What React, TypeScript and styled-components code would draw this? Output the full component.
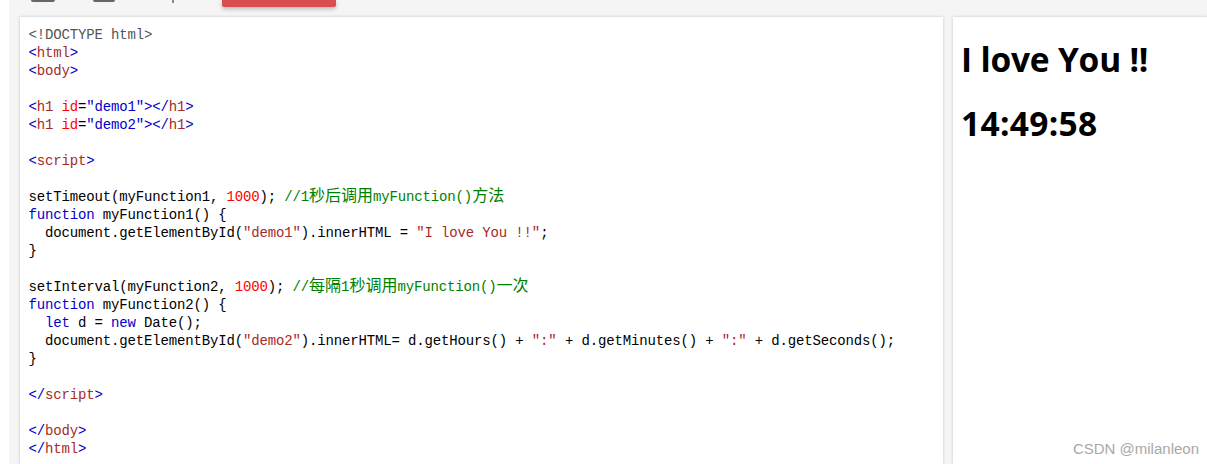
import React from 'react';
import styled, { createGlobalStyle } from 'styled-components';

const GlobalStyle = createGlobalStyle`
  html, body {
    margin: 0;
    padding: 0;
    background: #fff;
  }
  body {
    height: 464px;
    overflow: hidden;
  }
`;

type TokenKind = 'plain' | 'bracket' | 'tag' | 'attr' | 'value' | 'doctype' | 'keyword' | 'number' | 'string' | 'comment';

const kindColors: Record<TokenKind, string> = {
  plain: '#000000',
  bracket: '#0000cd',
  tag: '#a52a2a',
  attr: '#ff0000',
  value: '#0000cd',
  doctype: '#555555',
  keyword: '#0000cd',
  number: '#ff0000',
  string: '#a52a2a',
  comment: '#008000',
};

type Token = [TokenKind, string];

const tag = (open: string, name: string): Token[] => [
  ['bracket', open],
  ['tag', name],
  ['bracket', '>'],
];

const lines: Token[][] = [
  [['doctype', '<!DOCTYPE html>']],
  tag('<', 'html'),
  tag('<', 'body'),
  [],
  [['bracket', '<'], ['tag', 'h1 '], ['attr', 'id'], ['plain', '='], ['value', '"demo1"'], ['bracket', '></'], ['tag', 'h1'], ['bracket', '>']],
  [['bracket', '<'], ['tag', 'h1 '], ['attr', 'id'], ['plain', '='], ['value', '"demo2"'], ['bracket', '></'], ['tag', 'h1'], ['bracket', '>']],
  [],
  tag('<', 'script'),
  [],
  [['plain', 'setTimeout(myFunction1, '], ['number', '1000'], ['plain', '); '], ['comment', '//1秒后调用myFunction()方法']],
  [['keyword', 'function'], ['plain', ' myFunction1() {']],
  [['plain', '  document.getElementById('], ['string', '"demo1"'], ['plain', ').innerHTML = '], ['string', '"I love You !!"'], ['plain', ';']],
  [['plain', '}']],
  [],
  [['plain', 'setInterval(myFunction2, '], ['number', '1000'], ['plain', '); '], ['comment', '//每隔1秒调用myFunction()一次']],
  [['keyword', 'function'], ['plain', ' myFunction2() {']],
  [['plain', '  '], ['keyword', 'let'], ['plain', ' d = '], ['keyword', 'new'], ['plain', ' Date();']],
  [['plain', '  document.getElementById('], ['string', '"demo2"'], ['plain', ').innerHTML= d.getHours() + '], ['string', '":"'], ['plain', ' + d.getMinutes() + '], ['string', '":"'], ['plain', ' + d.getSeconds();']],
  [['plain', '}']],
  [],
  tag('</', 'script'),
  [],
  tag('</', 'body'),
  tag('</', 'html'),
];

// han characters sit in their own span, they run wider than the mono cell
const renderText = (text: string) =>
  text.split(/([\u4e00-\u9fff]+)/).map((part, i) =>
    /[\u4e00-\u9fff]/.test(part) ? <Han key={i}>{part}</Han> : part,
  );

const App: React.FC = () => {
  return (
    <Page>
      <GlobalStyle />
      <Toolbar>
        <ToolIcon $width={24} />
        <ToolIcon $width={22} $left={38} />
        <ToolTick />
        <RunButton />
      </Toolbar>
      <Panels>
        <CodePanel>
          {lines.map((tokens, i) => (
            <CodeLine key={i}>
              {tokens.map(([kind, text], j) => (
                <TokenText key={j} $kind={kind}>
                  {renderText(text)}
                </TokenText>
              ))}
            </CodeLine>
          ))}
        </CodePanel>
        <Divider />
        <ResultPanel>
          <Heading $spacing={-0.2}>I love You !!</Heading>
          <Heading $spacing={0.3}>14:49:58</Heading>
          <Watermark>CSDN @milanleon</Watermark>
        </ResultPanel>
      </Panels>
    </Page>
  );
};

export default App;

const Page = styled.div`
  width: 1207px;
  height: 464px;
  padding-left: 9px;
  box-sizing: border-box;
  display: flex;
  flex-direction: column;
  background: #fff;
  overflow: hidden;
`;

const Toolbar = styled.div`
  height: 17px;
  flex: none;
  display: flex;
  align-items: flex-start;
  padding-left: 22px;
  background: #f5f5f5;
`;

const ToolIcon = styled.div<{ $width: number; $left?: number }>`
  width: ${(p) => p.$width}px;
  height: 2px;
  margin-left: ${(p) => p.$left ?? 0}px;
  background: #666;
  border-radius: 0 0 2px 2px;
`;

const ToolTick = styled.div`
  width: 2px;
  height: 3px;
  margin-left: 57px;
  background: #888;
`;

const RunButton = styled.div`
  width: 114px;
  height: 7px;
  margin-left: 48px;
  background: #d84f50;
  border-radius: 0 0 2px 2px;
  box-shadow: 0 2px 4px rgba(0, 0, 0, 0.25);
`;

const Panels = styled.div`
  flex: 1;
  min-height: 0;
  display: flex;
  padding-left: 11px;
  background: #f5f5f5;
`;

const CodePanel = styled.div`
  width: 923px;
  flex: none;
  box-sizing: border-box;
  padding: 9px 0 0 8.5px;
  background: #fff;
  box-shadow: 0 0 3px rgba(0, 0, 0, 0.2);
  font-family: 'Liberation Mono', 'Noto Sans CJK SC', monospace;
  font-size: 14px;
  letter-spacing: -0.15px;
  overflow: hidden;
`;

const CodeLine = styled.div`
  height: 18px;
  line-height: 18px;
  white-space: pre;
`;

const TokenText = styled.span<{ $kind: TokenKind }>`
  color: ${(p) => kindColors[p.$kind]};
`;

const Han = styled.span`
  font-family: 'Noto Sans CJK SC', sans-serif;
  font-size: 16px;
  line-height: 0;
  letter-spacing: 0;
`;

const Divider = styled.div`
  width: 10px;
  flex: none;
`;

const ResultPanel = styled.div`
  flex: 1;
  position: relative;
  padding: 0 8px;
  background: #fff;
  box-shadow: 0 0 3px rgba(0, 0, 0, 0.2);
  overflow: hidden;
`;

const Heading = styled.h1<{ $spacing: number }>`
  margin: 21px 0;
  font-family: 'Open Sans', 'Noto Sans', sans-serif;
  font-size: 33.5px;
  font-weight: 700;
  line-height: 43px;
  letter-spacing: ${(p) => p.$spacing}px;
  color: #000;
`;

const Watermark = styled.div`
  position: absolute;
  right: 8px;
  bottom: 7px;
  font-family: 'Liberation Sans', sans-serif;
  font-size: 15px;
  color: #a8a8a8;
`;
